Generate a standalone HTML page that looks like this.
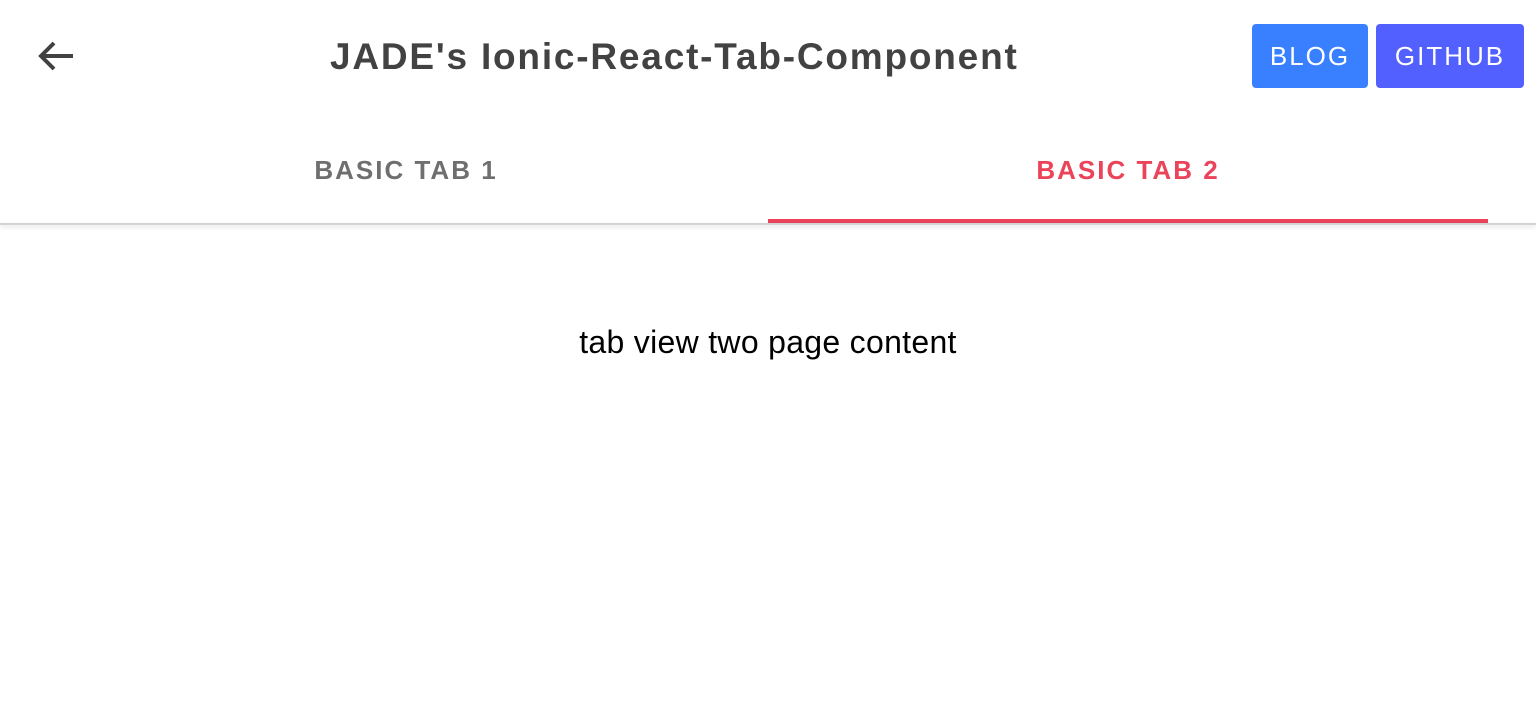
<!DOCTYPE html>
<html><head><style>
body{margin:0;width:1536px;height:725px;background:#fff;font-family:"Liberation Sans",sans-serif;position:relative;overflow:hidden}
.title{position:absolute;left:330px;top:36px;font-size:37px;color:#424242;font-weight:bold;letter-spacing:1.8px}
.btn{position:absolute;top:24px;height:64px;border-radius:4px;color:#fff;font-size:26px;letter-spacing:2px;display:flex;align-items:center;justify-content:center}
.tab{position:absolute;top:155px;font-size:26px;letter-spacing:2px;font-weight:bold;text-align:center}
</style></head><body>
<svg style="position:absolute;left:36px;top:38px" width="40" height="36" viewBox="0 0 40 36"><path d="M37 18H6M18 5L5 18L18 31" fill="none" stroke="#424242" stroke-width="4"/></svg>
<div class="title">JADE's Ionic-React-Tab-Component</div>
<div class="btn" style="left:1252px;width:116px;background:#3880ff">BLOG</div>
<div class="btn" style="left:1376px;width:148px;background:#5260ff">GITHUB</div>
<div class="tab" style="left:0;width:812px;color:#6f6f6f">BASIC TAB 1</div>
<div class="tab" style="left:768px;width:720px;color:#eb445a">BASIC TAB 2</div>
<div style="position:absolute;left:768px;top:219px;width:720px;height:4px;background:#eb445a"></div>
<div style="position:absolute;left:0;top:223px;width:1536px;height:2px;background:#d4d4d4;box-shadow:0 2px 4px rgba(0,0,0,0.15)"></div>
<div style="position:absolute;left:0;width:1536px;top:324px;text-align:center;font-size:32px;letter-spacing:0.3px;color:#000">tab view two page content</div>
</body></html>
